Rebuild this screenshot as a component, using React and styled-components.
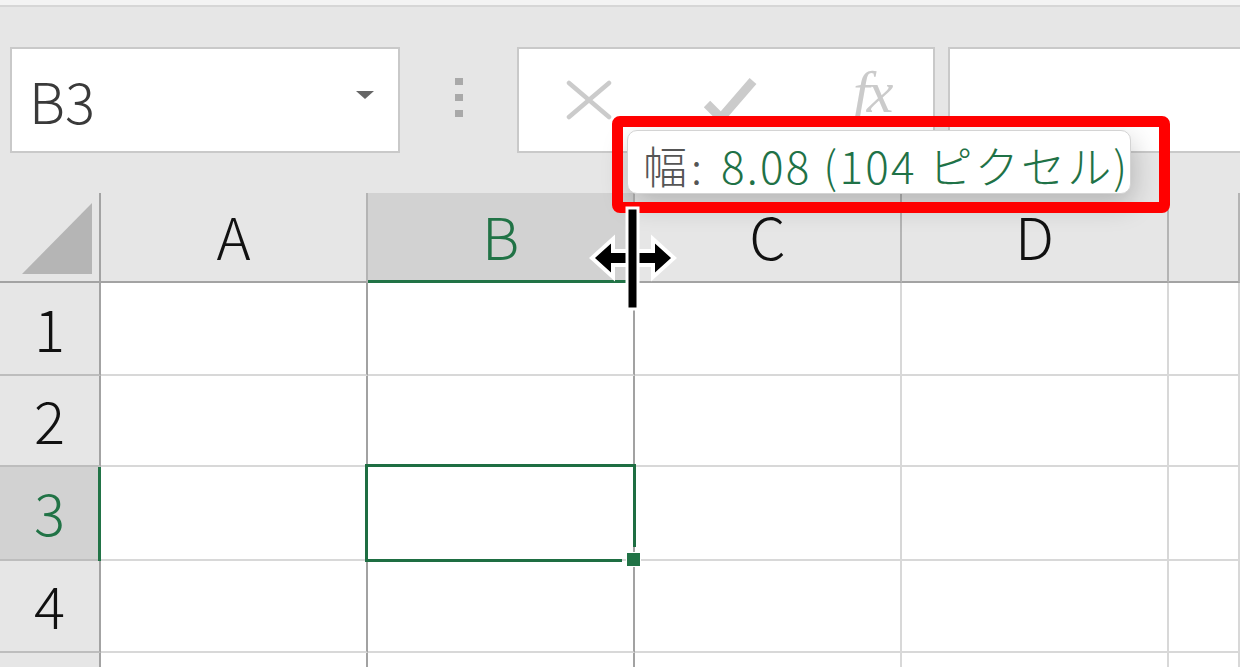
import React from "react";
import styled, { createGlobalStyle } from "styled-components";

const Global = createGlobalStyle`
  html, body { margin: 0; padding: 0; background: #ffffff; }
  body { overflow: hidden; font-family: "Noto Sans CJK JP", "Noto Sans", sans-serif; }
`;

const GREEN = "#217346";

const Page = styled.div`
  position: relative;
  width: 1240px;
  height: 667px;
  overflow: hidden;
  background: #ffffff;
`;

const TopStrip = styled.div`
  height: 5px;
  background: #f3f3f3;
  border-bottom: 2px solid #d6d6d6;
`;

const Toolbar = styled.div`
  height: 186px;
  box-sizing: border-box;
  background: #e6e6e6;
  display: flex;
  align-items: flex-start;
  padding: 40px 0 0 10px;
`;

const Box = styled.div`
  box-sizing: border-box;
  height: 106px;
  background: #ffffff;
  border: 2px solid #c9c9c9;
  display: flex;
  align-items: center;
`;

const NameBox = styled(Box)`
  width: 390px;
  padding: 0 24px 0 17px;
  justify-content: space-between;
`;

const NameText = styled.span`
  font-size: 56px;
  font-weight: 300;
  line-height: 1;
  color: #3a3a3a;
`;

const DropTriangle = styled.span`
  width: 0;
  height: 0;
  border-left: 9px solid transparent;
  border-right: 9px solid transparent;
  border-top: 8px solid #666666;
  margin-top: -10px;
`;

const Grip = styled.div`
  width: 117px;
  height: 106px;
  display: flex;
  flex-direction: column;
  align-items: center;
  justify-content: center;
  gap: 9px;
  padding-bottom: 6px;
  box-sizing: border-box;
`;

const GripDot = styled.span`
  width: 8px;
  height: 7px;
  background: #a9a9a9;
`;

const FormulaButtons = styled(Box)`
  width: 418px;
  padding: 0 0 0 46px;
`;

const IconSlot = styled.div`
  width: ${(p) => p.$w}px;
  display: flex;
  align-items: center;
  justify-content: flex-start;
`;

const FxText = styled.span`
  font-family: "Liberation Serif", serif;
  font-style: italic;
  font-size: 60px;
  line-height: 1;
  color: #cbcbcb;
  margin-top: -16px;
  letter-spacing: -3px;
`;

const FormulaInput = styled(Box)`
  flex: 1;
  margin-left: 13px;
  border-right: none;
`;

const Sheet = styled.div`
  display: grid;
  grid-template-columns: 101px 267px 267px 267px 267px 1fr;
  grid-template-rows: 90px 93px 91px 94px 92px 92px;
`;

const HeadCell = styled.div`
  box-sizing: border-box;
  position: relative;
  background: ${(p) => (p.$sel ? "#d2d2d2" : "#e6e6e6")};
  border-right: 2px solid #b4b4b4;
  border-bottom: 2px solid #a3a3a3;
  display: flex;
  align-items: center;
  justify-content: center;
  font-size: 58px;
  font-weight: 300;
  line-height: 1;
  color: ${(p) => (p.$sel ? GREEN : "#111111")};
  padding-bottom: 4px;

  ${(p) =>
    p.$sel &&
    `&::after {
      content: "";
      position: absolute;
      left: 0;
      right: -2px;
      bottom: -2px;
      height: 3px;
      background: ${GREEN};
    }`}
`;

const Corner = styled.div`
  box-sizing: border-box;
  background: #e6e6e6;
  border-right: 2px solid #a3a3a3;
  border-bottom: 2px solid #a3a3a3;
  display: flex;
  align-items: flex-end;
  justify-content: flex-end;
  padding: 0 7px 7px 0;
`;

const CornerTriangle = styled.div`
  width: 70px;
  height: 71px;
  background: #b5b5b5;
  clip-path: polygon(100% 0, 100% 100%, 0 100%);
`;

const RowHead = styled.div`
  box-sizing: border-box;
  position: relative;
  background: ${(p) => (p.$sel ? "#d2d2d2" : "#e6e6e6")};
  border-right: 2px solid #a3a3a3;
  border-bottom: 2px solid #bdbdbd;
  display: flex;
  align-items: center;
  justify-content: center;
  font-size: 58px;
  font-weight: 300;
  line-height: 1;
  color: ${(p) => (p.$sel ? GREEN : "#111111")};
  padding-bottom: 4px;

  ${(p) =>
    p.$sel &&
    `&::after {
      content: "";
      position: absolute;
      top: 0;
      bottom: -2px;
      right: -2px;
      width: 3px;
      background: ${GREEN};
    }`}
`;

const Cell = styled.div`
  box-sizing: border-box;
  position: relative;
  z-index: ${(p) => (p.$active ? 1 : 0)};
  background: #ffffff;
  border-right: 2px solid ${(p) => (p.$dark ? "#a2a2a2" : "#d8d8d8")};
  border-bottom: 2px solid #d8d8d8;
`;

const SelectionFrame = styled.div`
  position: absolute;
  left: -3px;
  top: -3px;
  right: -3px;
  bottom: -3px;
  border: 3px solid #1e6e42;
  border-right-color: transparent;
  border-bottom-color: transparent;
`;

const SelRight = styled.div`
  position: absolute;
  right: -3px;
  top: -3px;
  width: 3px;
  height: 83px;
  background: #1e6e42;
`;

const SelBottom = styled.div`
  position: absolute;
  left: -3px;
  bottom: -3px;
  height: 3px;
  width: 257px;
  background: #1e6e42;
`;

const FillHandle = styled.div`
  position: absolute;
  right: -7px;
  bottom: -7px;
  width: 13px;
  height: 13px;
  background: ${GREEN};
  outline: 1px solid #ffffff;
`;

const Annotation = styled.div`
  position: absolute;
  left: 612px;
  top: 116px;
  width: 558px;
  height: 97px;
  box-sizing: border-box;
  border: 11px solid #ff0000;
  border-radius: 8px;
  z-index: 3;
`;

const Tooltip = styled.div`
  position: absolute;
  left: 627px;
  top: 130px;
  width: 504px;
  height: 64px;
  box-sizing: border-box;
  background: #ffffff;
  border: 1px solid #d4d4d4;
  border-radius: 10px;
  box-shadow: 2px 10px 28px rgba(0, 0, 0, 0.22);
  display: flex;
  align-items: center;
  padding: 6px 0 0 15px;
  font-size: 44px;
  font-weight: 300;
  line-height: 1;
  white-space: nowrap;
  z-index: 2;
`;

const TipLabel = styled.span`
  color: #555555;
  letter-spacing: 4px;
`;

const TipValue = styled.span`
  color: #1f7247;
  letter-spacing: 2.2px;
  margin-left: 15px;
`;

const CursorSvg = styled.svg`
  position: absolute;
  left: 588px;
  top: 202px;
  z-index: 4;
`;

const columns = ["A", "B", "C", "D", ""];

export default function App() {
  const rows = [1, 2, 3, 4, 5];
  return (
    <Page>
      <Global />
      <TopStrip />
      <Toolbar>
        <NameBox>
          <NameText>B3</NameText>
          <DropTriangle />
        </NameBox>
        <Grip>
          <GripDot />
          <GripDot />
          <GripDot />
        </Grip>
        <FormulaButtons>
          <IconSlot $w={138}>
            <svg width="48" height="40" viewBox="0 0 48 40">
              <path d="M4 3 L44 37 M44 3 L4 37" stroke="#cbcbcb" strokeWidth="4.5" strokeLinecap="round" fill="none" />
            </svg>
          </IconSlot>
          <IconSlot $w={150}>
            <svg width="54" height="46" viewBox="0 0 54 46">
              <path d="M4 27 L18 41 L50 4" stroke="#cbcbcb" strokeWidth="9" strokeLinejoin="round" fill="none" />
            </svg>
          </IconSlot>
          <IconSlot $w={60}>
            <FxText>fx</FxText>
          </IconSlot>
        </FormulaButtons>
        <FormulaInput />
      </Toolbar>

      <Sheet>
        <Corner>
          <CornerTriangle />
        </Corner>
        {columns.map((c) => (
          <HeadCell key={c || "E"} $sel={c === "B"}>
            {c}
          </HeadCell>
        ))}
        {rows.map((r) => (
          <React.Fragment key={r}>
            <RowHead $sel={r === 3}>{r}</RowHead>
            {columns.map((c, i) => {
              const active = r === 3 && c === "B";
              return (
                <Cell key={c || "E"} $dark={i <= 1} $active={active}>
                  {active && (
                    <>
                      <SelectionFrame />
                      <SelRight />
                      <SelBottom />
                      <FillHandle />
                    </>
                  )}
                </Cell>
              );
            })}
          </React.Fragment>
        ))}
      </Sheet>

      <Tooltip>
        <TipLabel>幅:</TipLabel>
        <TipValue>8.08 (104 ピクセル)</TipValue>
      </Tooltip>
      <Annotation />

      <CursorSvg width="94" height="110" viewBox="0 0 94 110">
        <polygon
          points="4,56 25,37 25,49 65,49 65,37 86,56 65,75 65,63 25,63 25,75"
          fill="#000"
          stroke="#fff"
          strokeWidth="4"
          strokeLinejoin="miter"
        />
        <rect x="39" y="6" width="11" height="101" fill="#000" stroke="#fff" strokeWidth="3" />
      </CursorSvg>
    </Page>
  );
}
